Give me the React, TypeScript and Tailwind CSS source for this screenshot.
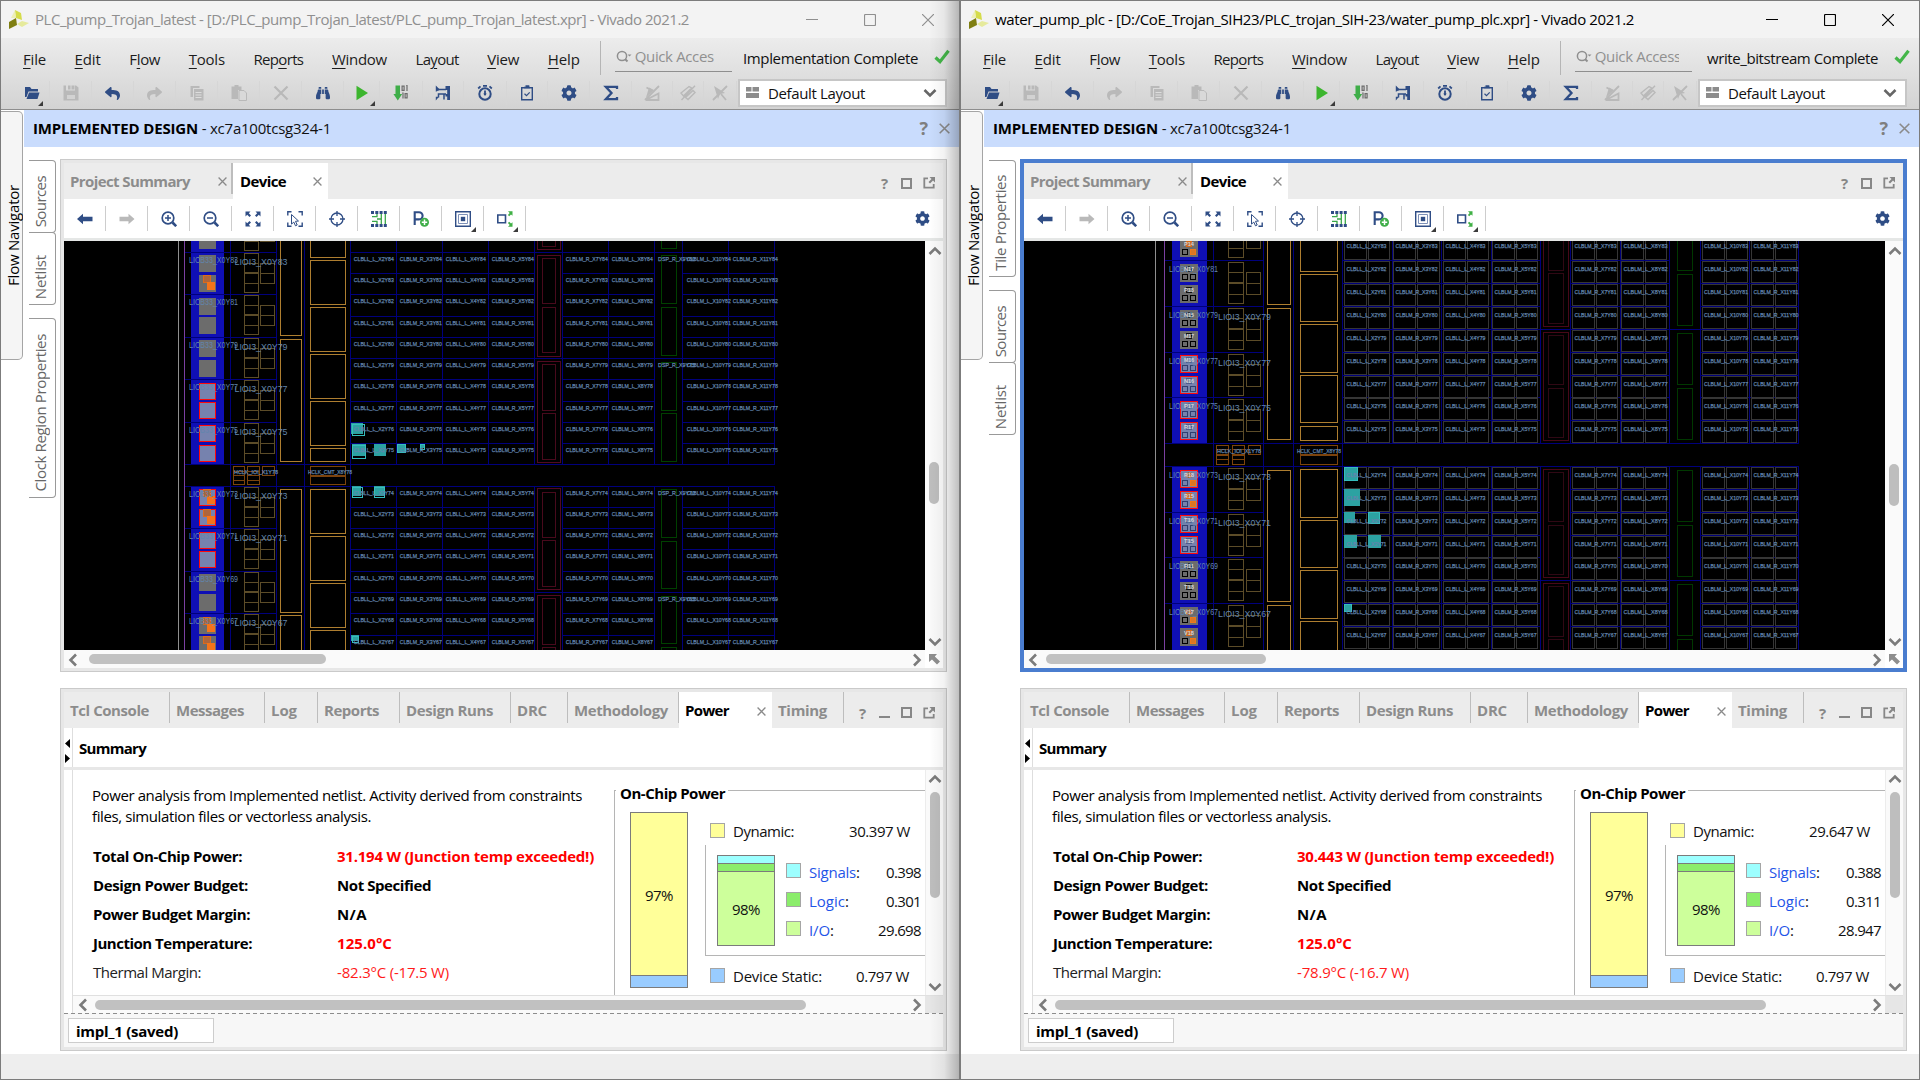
import React, { createContext, useContext, useLayoutEffect, useRef, useState } from "react";
import { FaBinoculars, FaCog, FaReply, FaShare } from "react-icons/fa";

/* ---------- text ---------- */

type FitProps = { w: number; children: React.ReactNode; className?: string; vertical?: boolean };

/** Inline label whose tracking is tuned so that it occupies exactly `w` pixels. */
function Fit({ w, children, className = "", vertical = false }: FitProps) {
  const ref = useRef<HTMLSpanElement>(null);
  const [tracking, setTracking] = useState(0);
  useLayoutEffect(() => {
    const el = ref.current;
    if (!el) return;
    const natural = vertical ? el.offsetHeight : el.getBoundingClientRect().width;
    const count = (el.textContent || "x").length;
    setTracking((w - natural) / count);
  }, [w, vertical]);
  return (
    <span
      ref={ref}
      className={"inline-block shrink-0 whitespace-pre leading-5 " + (vertical ? "rotate-180 [writing-mode:vertical-rl] " : "") + className}
      style={{ letterSpacing: tracking }}
    >
      {children}
    </span>
  );
}

/* ---------- data ---------- */

type Pad = { y: number; red?: boolean; orange?: boolean; name?: string };
type Box = [number, number, number, number];

type Geometry = {
  ox: number;
  edge: number;
  purple: number;
  blueX: number;
  blueW: number;
  gapTop: number;
  gapBottom: number;
  leftV: number[];
  clb: { x: number; w: number; name: string; tw: number }[];
  clbEnd: number;
  right: number;
  rows: [number, number][];
  wideRows: number[];
  ioRows: [number, number][];
  noIoi: number[];
  padX: number;
  padS: number;
  pads: Pad[];
  logicA: [number, number];
  logicB: [number, number];
  logicLines: number[];
  gold: Box[];
  hclk: Box[];
  hclkText: [number, number, string][];
  bramOuter: Box[];
  bramInner: Box[];
  dsp: Box[];
  colV: number[];
  slices: boolean;
  teal: Box[];
  tealOutline: Box[];
  dspText?: [number, number, number][];
  clbTextDy: number;
  clbTextDx: number;
  lioX: number;
  lioDy: number;
  ioiX: number;
  ioiDy: number;
};

const spans = (x1: number, x2: number, ys: [number, number][]): Box[] => ys.map(([a, b]) => [x1, a, x2, b]);

const leftChip: Geometry = {
  ox: 64,
  edge: 178.5,
  purple: 184.5,
  blueX: 191,
  blueW: 33,
  gapTop: 464.5,
  gapBottom: 486.5,
  leftV: [230.5, 276.5, 304.5, 350.5],
  clb: [
    { x: 350.5, w: 46, name: "CLBLL_L_X2", tw: 40 },
    { x: 396.5, w: 46, name: "CLBLM_R_X3", tw: 42 },
    { x: 442.5, w: 46, name: "CLBLL_L_X4", tw: 40 },
    { x: 488.5, w: 46, name: "CLBLM_R_X5", tw: 42 },
    { x: 562.5, w: 46, name: "CLBLM_R_X7", tw: 42 },
    { x: 608.5, w: 46, name: "CLBLM_L_X8", tw: 41 },
    { x: 683.5, w: 45, name: "CLBLM_L_X10", tw: 44 },
    { x: 729.5, w: 45, name: "CLBLM_R_X11", tw: 45 },
  ],
  clbEnd: 534.5,
  right: 774.5,
  rows: [[252.5, 84], [273.5, 83], [294.5, 82], [316.5, 81], [337.5, 80], [358.5, 79], [379.5, 78], [401.5, 77], [422.5, 76], [443.5, 75], [486.5, 74], [507.5, 73], [528.5, 72], [549.5, 71], [571.5, 70], [592.5, 69], [613.5, 68], [635.5, 67]],
  wideRows: [252.5, 358.5, 464.5, 486.5, 592.5],
  ioRows: [[210, 85], [252.5, 83], [294.5, 81], [337.5, 79], [379.5, 77], [422.5, 75], [486.5, 73], [528.5, 71], [571.5, 69], [613.5, 67]],
  noIoi: [81, 69],
  padX: 199,
  padS: 17,
  pads: [
    { y: 232 }, { y: 255 }, { y: 275, orange: true }, { y: 298 }, { y: 317 }, { y: 340 }, { y: 360 },
    { y: 383, red: true }, { y: 402, red: true }, { y: 425, red: true }, { y: 445, red: true },
    { y: 489, red: true, orange: true }, { y: 509, red: true, orange: true }, { y: 532, red: true }, { y: 551, red: true },
    { y: 574 }, { y: 594 }, { y: 617, orange: true }, { y: 636, orange: true },
  ],
  logicA: [244.5, 258.5],
  logicB: [260.5, 274.5],
  logicLines: [1, 11, 21, 31, 41],
  gold: [
    ...spans(280.5, 301.5, [[230.5, 335.5], [339.5, 461.5], [489.5, 612.5], [615.5, 660.5]]),
    ...spans(310.5, 345.5, [[230.5, 257.5], [260.5, 304.5], [307.5, 351.5], [354.5, 398.5], [401.5, 445.5], [448.5, 461.5], [489.5, 533.5], [536.5, 580.5], [583.5, 627.5], [630.5, 670.5]]),
  ],
  hclk: [
    ...spans(233.5, 244.5, [[466.5, 471.5], [471.5, 475.5], [475.5, 480.5], [480.5, 484.5]]),
    ...spans(247.5, 259.5, [[466.5, 471.5], [471.5, 475.5], [475.5, 480.5], [480.5, 484.5]]),
    [262.5, 466.5, 274.5, 475.5],
    [310.5, 466.5, 345.5, 475.5],
    [310.5, 476.5, 345.5, 484.5],
  ],
  hclkText: [[234, 474, "HCLK_IOI_X1Y78"], [308, 474, "HCLK_CMT_X8Y78"]],
  bramOuter: spans(537.5, 560.5, [[230.5, 249.5], [255.5, 356.5], [361.5, 462.5], [488.5, 589.5], [595.5, 700.5]]),
  bramInner: spans(542.5, 555.5, [[230.5, 246.5], [258.5, 303.5], [307.5, 352.5], [364.5, 410.5], [413.5, 459.5], [492.5, 537.5], [540.5, 586.5], [598.5, 644.5], [647.5, 690.5]]),
  dsp: spans(661.5, 676.5, [[230.5, 248.5], [255.5, 303.5], [307.5, 355.5], [362.5, 410.5], [413.5, 461.5], [489.5, 537.5], [541.5, 588.5], [596.5, 643.5], [647.5, 690.5]]),
  colV: [396.5, 442.5, 488.5, 534.5, 562.5, 608.5, 654.5, 682.5, 728.5, 774.5],
  slices: false,
  teal: [[351, 423, 363, 434], [352, 444, 366, 456], [374, 444, 386, 456], [398, 444, 406, 453], [420, 444, 424, 448], [352, 486, 361, 496], [374, 486, 385, 496], [351, 635, 359, 641]],
  tealOutline: [[352.5, 424.5, 364.5, 435.5], [352.5, 445.5, 365.5, 458.5], [397.5, 444.5, 405.5, 452.5], [420.5, 444.5, 424.5, 449.5], [352.5, 487.5, 362.5, 497.5], [374.5, 487.5, 384.5, 497.5], [352.5, 636.5, 358.5, 642.5]],
  dspText: [[658, 252.5, 80], [658, 358.5, 75], [658, 486.5, 70], [658, 592.5, 65]],
  clbTextDy: 8.6,
  clbTextDx: 3.3,
  lioX: 189,
  lioDy: 10.5,
  ioiX: 234.5,
  ioiDy: 12.3,
};

const rightChip: Geometry = {
  ox: 1024,
  edge: 1155.5,
  purple: 1164.5,
  blueX: 1172,
  blueW: 35,
  gapTop: 443.5,
  gapBottom: 466.5,
  leftV: [1213.5, 1263.5, 1293.5, 1342.5],
  clb: [
    { x: 1342.5, w: 49, name: "CLBLL_L_X2", tw: 40 },
    { x: 1391.5, w: 50, name: "CLBLM_R_X3", tw: 42 },
    { x: 1441.5, w: 49, name: "CLBLL_L_X4", tw: 40 },
    { x: 1490.5, w: 49, name: "CLBLM_R_X5", tw: 42 },
    { x: 1570.5, w: 49, name: "CLBLM_R_X7", tw: 42 },
    { x: 1619.5, w: 49, name: "CLBLM_L_X8", tw: 44 },
    { x: 1700, w: 49, name: "CLBLM_L_X10", tw: 44 },
    { x: 1749.5, w: 49, name: "CLBLM_R_X11", tw: 45 },
  ],
  clbEnd: 1540.5,
  right: 1798.5,
  rows: [[237.5, 83], [260.5, 82], [283.5, 81], [306.5, 80], [329.5, 79], [352.5, 78], [375.5, 77], [397.5, 76], [420.5, 75], [466.5, 74], [489.5, 73], [512.5, 72], [535.5, 71], [557.5, 70], [580.5, 69], [603.5, 68], [626.5, 67]],
  wideRows: [329.5, 443.5, 466.5, 580.5],
  ioRows: [[214.5, 83], [260.5, 81], [306.5, 79], [352.5, 77], [397.5, 75], [466.5, 73], [512.5, 71], [557.5, 69], [603.5, 67]],
  noIoi: [81, 69],
  padX: 1180,
  padS: 18,
  pads: [
    { y: 239, orange: true, name: "P14" }, { y: 264, name: "N17" }, { y: 285, name: "P18" }, { y: 310, name: "N15" }, { y: 331, name: "M17" },
    { y: 355, red: true, name: "M16" }, { y: 376, red: true, name: "N16" }, { y: 401, red: true, name: "P17" }, { y: 422, red: true, name: "R17" },
    { y: 470, red: true, orange: true, name: "R18" }, { y: 491, red: true, orange: true, name: "R15" }, { y: 515, red: true, name: "T16" }, { y: 536, red: true, name: "T15" },
    { y: 561, name: "R11" }, { y: 582, name: "T18" }, { y: 607, orange: true, name: "V17" }, { y: 628, orange: true, name: "V18" },
  ],
  logicA: [1228.5, 1243.5],
  logicB: [1246.5, 1260.5],
  logicLines: [2, 12, 23, 34, 44],
  gold: [
    ...spans(1267.5, 1290.5, [[230.5, 304.5], [308.5, 439.5], [470.5, 601.5], [605.5, 670.5]]),
    ...spans(1300.5, 1337.5, [[230.5, 271.5], [274.5, 321.5], [324.5, 372.5], [375.5, 422.5], [426.5, 440.5], [469.5, 517.5], [520.5, 567.5], [570.5, 618.5], [621.5, 670.5]]),
  ],
  hclk: [
    ...spans(1216.5, 1228.5, [[445.5, 449.5], [449.5, 454.5], [455.5, 459.5], [459.5, 464.5]]),
    ...spans(1232.5, 1244.5, [[445.5, 449.5], [449.5, 454.5], [455.5, 459.5], [459.5, 464.5]]),
    [1248.5, 445.5, 1260.5, 454.5],
    [1300.5, 445.5, 1337.5, 454.5],
    [1300.5, 455.5, 1337.5, 464.5],
  ],
  hclkText: [[1217, 453, "HCLK_IOI_X1Y78"], [1297, 453, "HCLK_CMT_X8Y78"]],
  bramOuter: spans(1543.5, 1568.5, [[220.5, 326.5], [332.5, 440.5], [469.5, 577.5], [583.5, 700.5]]),
  bramInner: spans(1548.5, 1563.5, [[220.5, 270.5], [273.5, 323.5], [335.5, 384.5], [388.5, 437.5], [472.5, 521.5], [525.5, 574.5], [586.5, 636.5], [639.5, 690.5]]),
  dsp: spans(1677.5, 1692.5, [[220.5, 270.5], [274.5, 325.5], [333.5, 384.5], [388.5, 439.5], [470.5, 521.5], [525.5, 576.5], [584.5, 635.5], [639.5, 690.5]]),
  colV: [1392, 1441.5, 1491.5, 1540.5, 1570.5, 1620.5, 1669.5, 1700.5, 1749.5, 1798.5],
  slices: true,
  teal: [[1344, 467, 1358, 480], [1344, 489, 1360, 506], [1344, 512, 1355, 523], [1368, 512, 1379, 524], [1344, 535, 1357, 548], [1368, 535, 1381, 548], [1344, 604, 1352, 612]],
  tealOutline: [[1344.5, 467.5, 1357.5, 480.5], [1368.5, 512.5, 1379.5, 523.5], [1344.5, 604.5, 1351.5, 611.5]],
  clbTextDy: 10,
  clbTextDx: 4,
  lioX: 1169,
  lioDy: 11.5,
  ioiX: 1218,
  ioiDy: 13,
};

type Win = {
  active: boolean;
  title: string;
  titleW: number;
  status: string;
  statusW: number;
  quick: string;
  quickW: number;
  chip: Geometry;
  sideTabs: { name: string; h: number; w: number; gap: boolean }[];
  vThumb: string;
  hThumb: string;
  total: string;
  margin: string;
  dynamic: string;
  signals: string;
  logic: string;
  io: string;
};

const windows: Win[] = [
  {
    active: false,
    title: "PLC_pump_Trojan_latest - [D:/PLC_pump_Trojan_latest/PLC_pump_Trojan_latest.xpr] - Vivado 2021.2",
    titleW: 654,
    status: "Implementation Complete",
    statusW: 175,
    quick: "Quick Acces",
    quickW: 79,
    chip: leftChip,
    sideTabs: [
      { name: "Sources", h: 73, w: 51, gap: false },
      { name: "Netlist", h: 73, w: 44, gap: false },
      { name: "Clock Region Properties", h: 180, w: 158, gap: true },
    ],
    vThumb: "mt-[203px]",
    hThumb: "ml-[8px] w-[237px]",
    total: "31.194 W (Junction temp exceeded!)",
    margin: "-82.3°C (-17.5 W)",
    dynamic: "30.397 W",
    signals: "0.398",
    logic: "0.301",
    io: "29.698",
  },
  {
    active: true,
    title: "water_pump_plc - [D:/CoE_Trojan_SIH23/PLC_trojan_SIH-23/water_pump_plc.xpr] - Vivado 2021.2",
    titleW: 639,
    status: "write_bitstream Complete",
    statusW: 171,
    quick: "Quick Access",
    quickW: 86,
    chip: rightChip,
    sideTabs: [
      { name: "Tile Properties", h: 117, w: 96, gap: false },
      { name: "Sources", h: 73, w: 51, gap: true },
      { name: "Netlist", h: 73, w: 44, gap: false },
    ],
    vThumb: "mt-[205px]",
    hThumb: "ml-[5px] w-[220px]",
    total: "30.443 W (Junction temp exceeded!)",
    margin: "-78.9°C (-16.7 W)",
    dynamic: "29.647 W",
    signals: "0.388",
    logic: "0.311",
    io: "28.947",
  },
];

const WinContext = createContext<Win>(windows[0]);

/* ---------- icons ---------- */

const navy = "#2f4d85";
const dim = "#b9b9b9";

type SvgProps = { children: React.ReactNode; size?: number; className?: string };
function Svg({ children, size = 16, className = "" }: SvgProps) {
  return (
    <svg width={size} height={size} viewBox="0 0 16 16" fill="none" className={"block shrink-0 " + className}>
      {children}
    </svg>
  );
}

const Logo = () => (
  <svg width="20" height="20" viewBox="0 0 20 20" className="block shrink-0">
    <path d="M0 12 7 8 8 15 0 19Z" fill="#7f7f12" />
    <path d="M6 0 12 3 13 10 7 8Z" fill="#d5dc4b" />
    <path d="M6 0 2 8 7 8Z" fill="#e9ed9b" opacity=".7" />
    <path d="M8 14 13 11 20 13 13 17Z" fill="#e6ea9c" />
  </svg>
);
const OpenIcon = () => (
  <Svg><path d="M1 2h5l1.500 2H14v2.500H4.500L2.500 12 1 12Z" fill={navy} /><path d="M5 7.500h10.500L13.500 14H2.500Z" fill={navy} /></Svg>
);
const SaveIcon = () => (
  <Svg><path d="M.5.5h2.500v5h9V.5h1l2.500 2v13H.5Z" fill={dim} /><path d="M8.500.5h3V4.500h-3zM5 .5h2.500v4H5z" fill={dim} /><path d="M4 10h8v4H4z" fill="#d2d2d2" /></Svg>
);
const CopyIcon = () => (
  <Svg><path d="M1.500 1h9v2H4v9H1.500Z" fill={dim} /><path d="M5 4h9.500v11.500H5Z" fill={dim} /><path d="M6.500 7.500h6M6.500 10h6M6.500 12.500h6" stroke="#ddd" /></Svg>
);
const PasteIcon = () => (
  <Svg><path d="M.5 1.500h3V0h4v1.500h3V5H7v9H.5Z" fill={dim} /><path d="M8 5.500h5l2.500 2.500v7.500H8Z" fill="#d9d9d9" stroke={dim} /></Svg>
);
const CrossIcon = () => <Svg><path d="M1.500 1.500l13 13M14.500 1.500l-13 13" stroke={dim} strokeWidth="2.200" /></Svg>;
const RunIcon = () => <Svg><path d="M2.500.8 14 8 2.500 15.200Z" fill="#3cb52e" /></Svg>;
const BitsIcon = () => (
  <Svg>
    <path d="M2.500.5H7V9h2.200l-4.400 6.500L.4 9h2.100Z" fill="#3fae49" />
    <g stroke="#6d6d6d" strokeWidth="1.200"><path d="M9.100 1.100h2v4.300h-2zM13.200.5H14v5.500M9.200 8H10v5.500M12.100 8.600h2v4.300h-2z" /></g>
  </Svg>
);
const RouteIcon = () => (
  <Svg>
    <path d="M.8.5v15L4 11.800H.8ZM.8.5v6.300L5 4.800Z" fill={navy} />
    <path d="M3 4.500h8M3.500 12.500V9h7.500M9 14.500V9" stroke={navy} strokeWidth="1.500" />
    <path d="M10.500 1H15v14h-2.800V5h-1.700ZM10.500 9h2v2.500h-2z" fill={navy} />
  </Svg>
);
const TimerIcon = () => (
  <Svg><circle cx="8" cy="9" r="5.700" stroke={navy} strokeWidth="2" /><path d="M8 5.500v4.500M6 .8h4M1.200 3.500 3.500 1.300M14.800 3.500 12.500 1.300" stroke={navy} strokeWidth="1.800" /><path d="M6.300 8.500h3.400L8 11Z" fill={navy} /></Svg>
);
const ClipIcon = () => (
  <Svg><path d="M2.700 2.700h10.600v12H2.700z" stroke={navy} strokeWidth="1.400" /><path d="M5 2.500h6M6.500 1h3v2" stroke={navy} strokeWidth="1.600" /><path d="m5.500 8.800 2 1.900 3.200-3.400" stroke={navy} strokeWidth="1.200" /></Svg>
);
const SigmaIcon = () => <Svg><path d="M14 4V1.800H2.800L8.500 8l-5.700 6.200H14V12" stroke={navy} strokeWidth="2.300" /></Svg>;
const MuteA = () => <Svg><path d="M2 15h12.500V8.500ZM2.500 2.500 7 5M15 1 1 15" stroke={dim} strokeWidth="1.800" /><path d="M2 12.500 10 5 5 2.500Z" fill={dim} /></Svg>;
const MuteB = () => <Svg><path d="M1 8 9 1.500l2.500 1.500-8 8ZM5.500 12.500 13 5.500l2 2-7 7ZM15 .8 1.500 15" stroke={dim} strokeWidth="1.400" /></Svg>;
const MuteC = () => <Svg><path d="M2 1l11 7-5 1-2 5Z" fill={dim} /><path d="M15 1 1 15M9 9l5 6" stroke={dim} strokeWidth="1.800" /></Svg>;
const ArrowL = () => <Svg><path d="M0 8l6-5.200v3h9.500v4.400H6v3Z" fill={navy} /></Svg>;
const ArrowR = () => <Svg><path d="M15.500 8l-6-5.200v3H.5v4.400h9v3Z" fill={dim} /></Svg>;
const Zoom = ({ plus }: { plus?: boolean }) => (
  <Svg><circle cx="7" cy="7" r="5.800" stroke={navy} strokeWidth="1.700" /><path d={plus ? "M4 7h6M7 4v6" : "M4 7h6"} stroke={navy} strokeWidth="1.500" /><path d="m11.500 11.500 3.700 3.700" stroke={navy} strokeWidth="2.600" /></Svg>
);
const FitIcon = () => (
  <Svg><path d="M.5.5h5L3.800 2.200 6 4.500 4.500 6 2.200 3.800.5 5.500ZM15.500.5v5l-1.700-1.700L11.500 6 10 4.500l2.200-2.300L10.500.5ZM.5 15.500v-5l1.700 1.700L4.500 10 6 11.500l-2.200 2.300 1.700 1.700ZM15.500 15.500h-5l1.700-1.700-2.200-2.300 1.500-1.500 2.300 2.200 1.700-1.700Z" fill={navy} /></Svg>
);
const PickIcon = () => (
  <Svg><path d="M.8 4.500V.8h3.700M11.500.8h3.700v3.700M.8 11.500v3.700h3.700M15.200 11.500v3.700h-3.700" stroke={navy} strokeWidth="1.400" /><path d="m4.500 3.500 7 6.500-3 .3 1.700 3.700-1.700.8-1.700-3.700-2.300 2Z" stroke={navy} strokeWidth="1" /></Svg>
);
const Target = () => <Svg><circle cx="8" cy="8" r="6" stroke={navy} strokeWidth="1.300" /><path d="M8 0v5M8 11v5M0 8h5M11 8h5" stroke={navy} strokeWidth="1.300" /></Svg>;
const NetsIcon = () => (
  <Svg>
    <g fill={navy}>
      {[0, 4.300, 8.600, 12.800].map((x) => <path key={x} d={`M${x} 0h3v3h-3zM${x} 13h3v3h-3z`} />)}
    </g>
    <path d="M1 5.700h5V3M6 13v-2.700H1M6 8h4.300V3M10.300 8v5M14.300 3v10" stroke="#3aa648" strokeWidth="1.300" />
  </Svg>
);
const PIcon = () => (
  <Svg><path d="M1.700 14V1.200H6a3.600 3.600 0 0 1 0 7.200H2" stroke={navy} strokeWidth="2.100" /><circle cx="11.500" cy="11.200" r="4.500" fill="#3fae49" /><path d="M11.500 8.500v5.400M8.800 11.200h5.400" stroke="#fff" strokeWidth="1.500" /></Svg>
);
const NestIcon = () => (
  <Svg><path d="M.7.7h14.600v14.600H.7z" stroke={navy} strokeWidth="1.400" /><path d="M3.500 3.500h9v9h-9z" stroke="#7d90b8" /><path d="M5.800 5.800h4.400v4.400H5.800z" fill={navy} /></Svg>
);
const SpreadIcon = () => (
  <Svg><path d="M.8 4h7.700v7.700H.8z" stroke={navy} strokeWidth="1.600" /><path d="M15.500.3v4.500l-1.500-1.400-1.800 1.900-1.300-1.200L12.700 2 11 .3ZM15.500 15.700v-4.500L14 12.600l-1.800-1.900-1.300 1.200 1.800 2.100-1.700 1.700Z" fill="#3fb045" /></Svg>
);
const CheckIcon = () => <Svg><path d="M1.500 8.500 6 12.700 14.500 1.800" stroke="#44b649" strokeWidth="3.200" /></Svg>;
const Chevron = ({ d, c = "#7b7b7b" }: { d: "up" | "down" | "left" | "right"; c?: string }) => {
  const paths = { up: "M2.500 11 8 5.500 13.500 11", down: "M2.500 5 8 10.500 13.500 5", left: "M11 2.500 5.500 8 11 13.500", right: "M5 2.500 10.500 8 5 13.500" };
  return <Svg><path d={paths[d]} stroke={c} strokeWidth="2.600" /></Svg>;
};
const SmallX = ({ size = 9 }: { size?: number }) => <Svg size={size}><path d="M1 1l14 14M15 1 1 15" stroke="#8a8a8a" strokeWidth="2.300" /></Svg>;
const HelpMark = () => <span className="block w-[11px] text-center text-[15px] leading-4 font-bold text-[#878787]">?</span>;
const MaxBox = () => <span className="block size-[11px] border-2 border-[#878787]" />;
const PopOut = () => (
  <svg width="12" height="12" viewBox="0 0 12 12" fill="none" className="block shrink-0"><path d="M5 1.300H1.300v9.400h9.400V7" stroke="#878787" strokeWidth="1.800" /><path d="M12 0v5.500L10 3.500 7 6.500 5.500 5l3-3L6.500 0Z" fill="#878787" /></svg>
);
const Corner = ({ className }: { className: string }) => (
  <svg width="5" height="5" viewBox="0 0 5 5" className={"absolute block " + className}><path d="M5 0V5H0Z" fill="#3b3b3b" /></svg>
);

/* ---------- title bar and header ---------- */

function TitleBar() {
  const win = useContext(WinContext);
  const tone = win.active ? "text-black" : "text-[#8f8f8f]";
  return (
    <div className={"flex h-[37px] items-center bg-[#f3f3f3] pl-[8px] " + tone}>
      <Logo />
      <Fit w={win.titleW} className="ml-[6px] -mt-px">{win.title}</Fit>
      <div className="ml-auto flex items-center gap-[46px] pr-[25px]">
        <svg width="12" height="12" viewBox="0 0 12 12"><path d="M0 5.500h12" stroke="currentColor" /></svg>
        <svg width="12" height="12" viewBox="0 0 12 12" fill="none"><rect x=".5" y=".5" width="11" height="11" rx="1" stroke="currentColor" strokeWidth="1.200" /></svg>
        <svg width="12" height="12" viewBox="0 0 12 12"><path d="M0 0l12 12M12 0 0 12" stroke="currentColor" strokeWidth="1.200" /></svg>
      </div>
    </div>
  );
}

const menus: [string, string, string, number][] = [
  ["", "F", "ile", 23], ["", "E", "dit", 26], ["F", "l", "ow", 31], ["", "T", "ools", 36], ["Rep", "o", "rts", 50],
  ["", "W", "indow", 55], ["La", "y", "out", 43], ["", "V", "iew", 32], ["", "H", "elp", 32],
];

function MenuRow() {
  const win = useContext(WinContext);
  return (
    <div className="flex h-[39px] items-start pl-[22px]">
      <div className="mt-[11px] flex gap-[28.600px] text-[#1c1c1c]">
        {menus.map(([a, b, c, w]) => (
          <Fit key={a + b + c} w={w}>{a}<span className="underline underline-offset-[3px]">{b}</span>{c}</Fit>
        ))}
      </div>
      <div className="mt-[3px] ml-[20px] h-[34px] w-px bg-[#b5b5b5]" />
      <div className="mt-[8px] ml-[14px] flex h-[26px] w-[117px] items-start border-b border-[#8f8f8f] text-[#909090]">
        <svg width="17" height="16" viewBox="0 0 17 16" fill="none" className="mt-[3px] ml-px shrink-0">
          <circle cx="6" cy="7" r="4.600" stroke="#8f8f8f" strokeWidth="1.500" /><path d="m9 10 2.500 2.500" stroke="#8f8f8f" strokeWidth="2" /><path d="M11.500 5.500h4l-2 2Z" fill="#8f8f8f" />
        </svg>
        <div className="ml-[2px] w-[84px] overflow-hidden"><Fit w={win.quickW}>{win.quick}</Fit></div>
      </div>
      <div className="ml-auto flex items-start pr-[9px] text-[#111]">
        <Fit w={win.statusW} className="mt-[10px]">{win.status}</Fit>
        <span className="mt-[11px] ml-[16px]"><CheckIcon /></span>
      </div>
    </div>
  );
}

type ToolDef = { w: string; icon: React.ReactNode; corner?: boolean };
const mainTools: ToolDef[] = [
  { w: "w-[42px] pl-[6px]", icon: <OpenIcon />, corner: true },
  { w: "w-[42px]", icon: <SaveIcon /> },
  { w: "w-[42px]", icon: <FaReply size={15} color={navy} /> },
  { w: "w-[42px]", icon: <FaShare size={15} color={dim} /> },
  { w: "w-[42px]", icon: <CopyIcon /> },
  { w: "w-[42px]", icon: <PasteIcon /> },
  { w: "w-[42px]", icon: <CrossIcon /> },
  { w: "w-[42px]", icon: <FaBinoculars size={14} color={navy} /> },
  { w: "w-[36px]", icon: <RunIcon />, corner: true },
  { w: "w-[43px]", icon: <BitsIcon /> },
  { w: "w-[41px]", icon: <RouteIcon /> },
  { w: "w-[43px]", icon: <TimerIcon /> },
  { w: "w-[41px]", icon: <ClipIcon /> },
  { w: "w-[42px]", icon: <FaCog size={16} color={navy} /> },
  { w: "w-[42px]", icon: <SigmaIcon /> },
  { w: "w-[41px]", icon: <MuteA /> },
  { w: "w-[31px]", icon: <MuteB /> },
  { w: "w-[33px]", icon: <MuteC /> },
];

function MainToolbar() {
  return (
    <div className="flex h-[32px] items-center pl-[7px]">
      {mainTools.map((t, i) => (
        <div key={i} className={"relative flex h-6 shrink-0 items-center justify-center border-r border-[#d6d6d6] " + t.w}>
          {t.icon}
          {t.corner && <Corner className={i === 0 ? "right-[6px] bottom-[-1px]" : "right-[4px] bottom-[-1px]"} />}
        </div>
      ))}
      <div className="ml-[1px] flex h-[28px] w-[209px] items-center border-2 border-[#c6c6c6] bg-white pr-[7px] pl-[6px]">
        <svg width="13" height="12" viewBox="0 0 13 12" className="block" fill="#8c8c8c"><path d="M0 0h5.500v4.500H0zM6.500 0H13v4.500H6.500zM0 6h13v5H0z" /></svg>
        <Fit w={97} className="ml-[9px] text-[#111]">Default Layout</Fit>
        <span className="ml-auto"><Chevron d="down" c="#666" /></span>
      </div>
    </div>
  );
}

/* ---------- device view ---------- */

const deviceTools: ToolDef[] = [
  { w: "w-[42px]", icon: <ArrowL /> },
  { w: "w-[42px]", icon: <ArrowR /> },
  { w: "w-[42px]", icon: <Zoom plus /> },
  { w: "w-[42px]", icon: <Zoom /> },
  { w: "w-[42px]", icon: <FitIcon /> },
  { w: "w-[42px]", icon: <PickIcon /> },
  { w: "w-[42px]", icon: <Target /> },
  { w: "w-[42px]", icon: <NetsIcon /> },
  { w: "w-[42px]", icon: <PIcon /> },
  { w: "w-[42px]", icon: <NestIcon />, corner: true },
  { w: "w-[42px]", icon: <SpreadIcon />, corner: true },
];

const rectsPath = (boxes: Box[]) => boxes.map(([a, b, c, d]) => `M${a} ${b}H${c}V${d}H${a}Z`).join("");

function DeviceCanvas() {
  const g = useContext(WinContext).chip;
  const x0 = g.purple;
  const logic: Box[] = [];
  g.ioRows.forEach(([y]) => {
    const l = g.logicLines;
    for (let i = 0; i < 4; i++) logic.push([g.logicA[0], y + l[i], g.logicA[1], y + l[i + 1] - (i % 2)]);
    logic.push([g.logicB[0], y + l[1], g.logicB[1], y + l[2]]);
    logic.push([g.logicB[0], y + l[2], g.logicB[1], y + l[3]]);
  });
  const ioLines = g.ioRows.map(([y]) => `M${x0} ${y}H${g.leftV[1]}`).join("");
  const clbLines = g.rows.map(([y]) => `M${g.clb[0].x} ${y}H${g.colV[3]}M${g.colV[4]} ${y}H${g.colV[6]}M${g.colV[7]} ${y}H${g.right}`).join("");
  const wide = g.wideRows.map((y) => `M${g.clb[0].x} ${y}H${g.right}`).join("");
  const slices: Box[] = [];
  if (g.slices) {
    g.rows.forEach(([y]) => g.clb.forEach((c) => {
      slices.push([c.x + 2, y + 1, c.x + 24, y + 22]);
      slices.push([c.x + 26, y + 1, c.x + c.w - 2, y + 22]);
    }));
  }
  const label = "#6285ad";
  return (
    <svg width="861" height="409" viewBox={`${g.ox} 241 861 409`} className="block shrink-0 bg-black" fontFamily="'Liberation Sans', Arial, sans-serif">
      <g shapeRendering="crispEdges" fill="none">
        <rect x={g.blueX} y="230" width={g.blueW} height={g.gapTop - 230} fill="#0f0fb5" />
        <rect x={g.blueX} y={g.gapBottom} width={g.blueW} height="200" fill="#0f0fb5" />
        <path d={`M${g.edge} 230V700`} stroke="#8f8f8f" />
        <path d={`M${g.purple} 230V700`} stroke="#7b3fa0" />
        <path d={ioLines + clbLines + wide} stroke="#00007c" />
        <path d={`M${x0} ${g.gapTop}H${g.clb[0].x}M${x0} ${g.gapBottom}H${g.clb[0].x}`} stroke="#00007c" />
        <path d={g.leftV.map((x) => `M${x} 230V700`).join("")} stroke="#00007c" />
        <path d={g.colV.map((x) => `M${x} 230V${g.gapTop}M${x} ${g.gapBottom}V700`).join("")} stroke="#00007c" />
        <path d={rectsPath(slices)} stroke="#363636" />
        <path d={rectsPath(logic)} stroke="#5c4c28" />
        <path d={rectsPath(g.gold)} stroke="#ae7e30" />
        <path d={rectsPath(g.hclk)} stroke="#7d430c" />
        <path d={rectsPath(g.bramOuter)} stroke={g.slices ? "#480818" : "#520a20"} />
        <path d={rectsPath(g.bramInner)} stroke={g.slices ? "#300814" : "#480a1c"} />
        <path d={rectsPath(g.dsp)} stroke={g.slices ? "#003800" : "#004000"} />
        {g.pads.map((p) => (
          <g key={p.y}>
            <rect x={g.padX} y={p.y} width={g.padS} height={g.padS} fill={p.red ? "#7682ae" : "#6c6c6c"} />
            {p.red && <rect x={g.padX + 0.5} y={p.y + 0.5} width={g.padS - 1} height={g.padS - 1} stroke="#ff0a0a" />}
            {p.name ? (
              <>
                <rect x={g.padX + 6.500} y={p.y + 2.500} width="5" height="5" stroke={p.orange ? "#d96716" : p.red ? "#4d5c8c" : "#111"} fill={p.orange ? "#c06a2c" : "none"} />
                <rect x={g.padX + 2.500} y={p.y + 10.500} width="5" height="5" stroke={p.red ? "#303f70" : "#000"} />
                <rect x={g.padX + 10.500} y={p.y + 10.500} width="5" height="5" stroke={p.orange ? "#f07818" : p.red ? "#303f70" : "#000"} fill={p.orange ? "#d97726" : "none"} />
              </>
            ) : p.orange ? (
              <>
                <rect x={g.padX + 4.500} y={p.y + 0.500} width="7" height="7" fill="#ad653c" stroke="#dc6a1a" />
                <rect x={g.padX + 8} y={p.y + 7} width="8" height="8" fill="#f4741a" />
              </>
            ) : null}
          </g>
        ))}
        {g.teal.map(([a, b, c, d]) => <rect key={`${a}-${b}`} x={a} y={b} width={c - a} height={d - b} fill="#2ca2a2" />)}
        <path d={rectsPath(g.tealOutline)} stroke="#35bdbd" />
      </g>
      <g fill={label}>
        {g.ioRows.slice(1).map(([y, n]) => (
          <g key={n}>
            <text x={g.lioX} y={y + g.lioDy} fontSize="8.500" textLength="49" lengthAdjust="spacingAndGlyphs">{`LIOB33_X0Y${n}`}</text>
            {!g.noIoi.includes(n) && <text x={g.ioiX} y={y + g.ioiDy} fontSize="9.500" textLength="53" lengthAdjust="spacingAndGlyphs">{`LIOI3_X0Y${n}`}</text>}
          </g>
        ))}
        <g stroke={label} strokeWidth="0.250">
          {g.rows.map(([y, n]) => g.clb.map((c) => (
            <text key={c.name + n} x={c.x + g.clbTextDx} y={y + g.clbTextDy} fontSize="5.800" textLength={c.tw} lengthAdjust="spacingAndGlyphs">{`${c.name}Y${n}`}</text>
          )))}
          {g.dspText?.map(([x, y, n]) => (
            <text key={n} x={x} y={y + g.clbTextDy} fontSize="5.800" textLength="37" lengthAdjust="spacingAndGlyphs">{`DSP_R_X9Y${n}`}</text>
          ))}
          {g.hclkText.map(([x, y, t]) => <text key={t} x={x} y={y} fontSize="5.800" textLength="44" lengthAdjust="spacingAndGlyphs">{t}</text>)}
        </g>
      </g>
      <g fill="#d5d5d5" fontWeight="bold">
        {g.pads.filter((p) => p.name).map((p) => <text key={p.y} x={g.padX + 4} y={p.y + 6.500} fontSize="5.800" textLength="10" lengthAdjust="spacingAndGlyphs">{p.name}</text>)}
      </g>
    </svg>
  );
}

function DevicePanel() {
  const win = useContext(WinContext);
  return (
    <div className={"flex h-[513px] w-[887px] flex-col " + (win.active ? "border-4 border-[#4a7dcf]" : "border border-[#cacaca] bg-[#e7e7e7] p-[3px]")}>
      <div className="flex h-9 shrink-0 bg-[#ececec] font-bold">
        <div className="flex w-[169px] items-center pl-[6px] text-[#8c8c8c]">
          <Fit w={120}>Project Summary</Fit>
          <span className="ml-auto pr-[4px]"><SmallX /></span>
          <span className="h-[31px] w-[2px] self-start bg-[#bdbdbd]" />
        </div>
        <div className="flex w-[95px] items-center bg-white pl-[7px]">
          <Fit w={46}>Device</Fit>
          <span className="ml-auto pr-[6px]"><SmallX /></span>
        </div>
        <div className="mt-[4px] ml-auto flex items-center gap-[11px] pr-[8px]"><HelpMark /><MaxBox /><PopOut /></div>
      </div>
      <div className="flex h-[39px] shrink-0 items-center bg-white">
        {deviceTools.map((t, i) => (
          <div key={i} className={"relative flex h-[25px] items-center justify-center border-r border-[#cdcdcd] " + t.w}>
            {t.icon}
            {t.corner && <Corner className="right-[7px] bottom-[-1px]" />}
          </div>
        ))}
        <span className="mr-[13px] ml-auto"><FaCog size={15} color={navy} /></span>
      </div>
      <div className="h-[3px] shrink-0 bg-[#e5e7e6]" />
      <div className="flex h-[409px] shrink-0">
        <DeviceCanvas />
        <div className="flex w-[18px] flex-col items-center bg-[#fafafa] pt-[2px]">
          <span className="ml-[2px]"><Chevron d="up" /></span>
          <div className={"h-[42px] w-[10px] rounded-full bg-[#bebebe] " + win.vThumb} />
          <span className="mt-auto ml-[2px]"><Chevron d="down" /></span>
        </div>
      </div>
      <div className="flex h-[18px] shrink-0 items-center bg-[#fafafa]">
        <span className="mt-[2px] ml-[1px]"><Chevron d="left" /></span>
        <div className={"mb-px h-[10px] rounded-full bg-[#c1c1c1] " + win.hThumb} />
        <span className="mt-[2px] ml-auto"><Chevron d="right" /></span>
        <span className="flex h-[18px] w-[18px] items-center justify-center bg-white">
          <svg width="11" height="11" viewBox="0 0 11 11" className="block"><path d="M0 0h8L5.800 2.500 11 7.500 8 10.500 3 5.500 0 8Z" fill="#8f8f8f" /></svg>
        </span>
      </div>
    </div>
  );
}

/* ---------- power report ---------- */

const reportTabs: [string, string, number][] = [
  ["Tcl Console", "w-[106px]", 79], ["Messages", "w-[95px]", 68], ["Log", "w-[53px]", 26], ["Reports", "w-[82px]", 55],
  ["Design Runs", "w-[111px]", 87], ["DRC", "w-[57px]", 30], ["Methodology", "w-[111px]", 94],
];

const Swatch = ({ className }: { className: string }) => <span className={"size-[15px] shrink-0 border border-[#a5a5a5] " + className} />;

function PowerChart() {
  const win = useContext(WinContext);
  const nested: [string, number, string, string, number][] = [
    ["Signals", 47, win.signals, "bg-[#9dffff]", 35],
    ["Logic", 36, win.logic, "bg-[#8bed6b]", 35],
    ["I/O", 21, win.io, "bg-[#cdff9b]", 43],
  ];
  return (
    <div className="flex w-[311px] shrink-0 flex-col overflow-hidden">
      <div className="mt-[13px] flex h-5 items-start">
        <span className="mt-[7px] h-[13px] w-[2px] border-t border-l border-[#b5b5b5]" />
        <Fit w={105} className="ml-[4px] font-bold">On-Chip Power</Fit>
        <span className="mt-[7px] ml-[3px] h-px flex-1 bg-[#b5b5b5]" />
      </div>
      <div className="flex flex-1 border-l border-[#b5b5b5]">
        <div className="mt-[9px] ml-[15px] flex h-[176px] w-[58px] shrink-0 flex-col border border-[#7b7b7b] text-[#111]">
          <div className="flex flex-1 items-center justify-center border-b border-[#7b7b7b] bg-[#ffff99] pt-[1px]"><Fit w={28}>97%</Fit></div>
          <div className="h-[11px] bg-[#99ccff]" />
        </div>
        <div className="ml-[17px] flex flex-1 flex-col text-[#111]">
          <div className="mt-[18px] ml-[5px] flex h-[19px] items-center">
            <Swatch className="mb-px bg-[#ffff99]" />
            <Fit w={61} className="ml-[8px]">Dynamic:</Fit>
            <span className="mr-[15px] ml-auto"><Fit w={61}>{win.dynamic}</Fit></span>
          </div>
          <div className="mt-[5px] flex h-[111px] shrink-0 border-b border-l border-[#b5b5b5]">
            <div className="mt-[10px] ml-[11px] flex h-[91px] w-[58px] shrink-0 flex-col border border-[#7b7b7b]">
              <div className="h-[8px] border-b border-[#7b7b7b] bg-[#9dffff]" />
              <div className="h-[8px] border-b border-[#7b7b7b] bg-[#8bed6b]" />
              <div className="flex flex-1 items-center justify-center bg-[#cdff9b] pt-[1px]"><Fit w={28}>98%</Fit></div>
            </div>
            <div className="mt-[17px] flex flex-1 flex-col gap-[9px]">
              {nested.map(([name, w, value, tone, vw]) => (
                <div key={name} className="flex h-5 items-center pl-[11px]">
                  <Swatch className={"mb-[4px] " + tone} />
                  <span className="ml-[8px] flex"><Fit w={w} className="text-[#1f55e8]">{name}</Fit><span className="leading-5">:</span></span>
                  <span className="mr-[4px] ml-auto"><Fit w={vw}>{value}</Fit></span>
                </div>
              ))}
            </div>
          </div>
          <div className="mt-[10px] ml-[5px] flex h-[19px] items-center">
            <Swatch className="mb-px bg-[#99ccff]" />
            <Fit w={89} className="ml-[8px]">Device Static:</Fit>
            <span className="mr-[16px] ml-auto"><Fit w={53}>0.797 W</Fit></span>
          </div>
        </div>
      </div>
    </div>
  );
}

function PowerPanel() {
  const win = useContext(WinContext);
  const facts: [string, number, string, number, string, string][] = [
    ["Total On-Chip Power:", 149, win.total, 257, "font-bold", "font-bold text-[#ff0000]"],
    ["Design Power Budget:", 155, "Not Specified", 94, "font-bold", "font-bold"],
    ["Power Budget Margin:", 157, "N/A", 30, "font-bold", "font-bold"],
    ["Junction Temperature:", 159, "125.0°C", 55, "font-bold", "font-bold text-[#ff0000]"],
    ["Thermal Margin:", 108, win.margin, 112, "text-[#222]", "text-[#ff1a1a]"],
  ];
  return (
    <div className="mt-4 flex h-[363px] w-[887px] flex-col border border-[#cacaca] bg-[#e7e7e7] p-[3px]">
      <div className="flex h-9 shrink-0 bg-[#ececec] font-bold text-[#8c8c8c]">
        {reportTabs.map(([name, cls, w]) => (
          <div key={name} className={"flex shrink-0 items-center pl-[6px] " + cls}>
            <Fit w={w}>{name}</Fit>
            <span className="ml-auto h-[31px] w-[1.500px] self-start bg-[#bdbdbd]" />
          </div>
        ))}
        <div className="flex w-[93px] shrink-0 items-center bg-white pl-[6px]">
          <Fit w={44} className="text-black">Power</Fit>
          <span className="mt-[2px] ml-auto pr-[6px]"><SmallX /></span>
        </div>
        <div className="flex w-[72px] shrink-0 items-center pl-[6px]">
          <Fit w={49}>Timing</Fit>
          <span className="ml-auto h-[31px] w-px self-start bg-[#bdbdbd]" />
        </div>
        <div className="mt-[5px] ml-auto flex items-center gap-[11px] pr-[8px]">
          <HelpMark />
          <span className="mt-[9px] h-[2px] w-[11px] bg-[#878787]" />
          <MaxBox />
          <PopOut />
        </div>
      </div>
      <div className="flex h-[285px] shrink-0 bg-white">
        <div className="flex w-[9px] shrink-0 flex-col border-r border-[#dedede] pt-[11px] pl-[1px]">
          <svg width="6" height="25" viewBox="0 0 6 25" className="block"><path d="M5 0v9L0 4.500ZM0 15v9l5-4.500Z" fill="#000" /></svg>
          <span className="mt-[3px] -ml-px h-[3px] w-[9px] bg-[#e7e7e7]" />
        </div>
        <div className="flex flex-1 flex-col">
          <div className="flex h-[42px] shrink-0 items-center border-b-[3px] border-[#e7e7e7] pl-[6px] font-bold"><Fit w={67}>Summary</Fit></div>
          <div className="flex h-[225px] shrink-0">
            <div className="flex w-[541px] shrink-0 flex-col pt-[15px] pl-[19px]">
              <Fit w={490} className="self-start !leading-[21px]">Power analysis from Implemented netlist. Activity derived from constraints</Fit>
              <Fit w={279} className="self-start !leading-[21px]">files, simulation files or vectorless analysis.</Fit>
              <div className="mt-[19px] flex flex-col gap-[9px] pl-[1px]">
                {facts.map(([name, w, value, vw, a, b]) => (
                  <div key={name} className="flex h-5">
                    <div className="w-[244px]"><Fit w={w} className={a}>{name}</Fit></div>
                    <Fit w={vw} className={b}>{value}</Fit>
                  </div>
                ))}
              </div>
            </div>
            <PowerChart />
            <div className="flex w-[18px] flex-col items-center border-l border-[#ececec] bg-[#fafafa] pt-[1px]">
              <span className="ml-px"><Chevron d="up" /></span>
              <div className="mt-[5px] h-[106px] w-[10px] rounded-full bg-[#bebebe]" />
              <span className="mt-auto ml-px"><Chevron d="down" /></span>
            </div>
          </div>
          <div className="flex h-[18px] shrink-0 items-center border-t border-[#e0e0e0] bg-[#fafafa]">
            <span className="mt-px ml-[2px]"><Chevron d="left" /></span>
            <div className="ml-[4px] h-[10px] w-[711px] rounded-full bg-[#c1c1c1]" />
            <span className="mt-px ml-auto"><Chevron d="right" /></span>
            <span className="h-full w-[18px] bg-[#e6e6e6]" />
          </div>
        </div>
      </div>
      <div className="flex flex-1 flex-col bg-[#f7f7f7]">
        <svg width="879" height="1" className="block"><path d="M0 .5H879" stroke="#8d8d8d" strokeDasharray="4 3" /></svg>
        <div className="mt-[4px] ml-1 flex h-[25px] w-[146px] items-center border border-[#cdcdcd] bg-white pl-[7px] font-bold"><Fit w={102}>impl_1 (saved)</Fit></div>
      </div>
    </div>
  );
}

/* ---------- window ---------- */

function Rails() {
  const win = useContext(WinContext);
  return (
    <div className="flex h-[944px] w-[59px] shrink-0">
      <div className="flex w-[23px] shrink-0 flex-col pt-px">
        <div className="flex h-[249px] w-[22px] items-center justify-center rounded-r-[5px] border border-l-0 border-[#a5a5a5] bg-[#f5f5f5] pl-[2px]">
          <Fit vertical w={101}>Flow Navigator</Fit>
        </div>
      </div>
      <div className="flex flex-col pt-[50px] pl-[5px] text-[#666]">
        {win.sideTabs.map((t) => (
          <div
            key={t.name}
            className={"-mb-px flex w-[27px] flex-col items-center justify-end rounded-r-[4px] border border-l-0 border-[#999] bg-white pr-[5px] pb-[5px] " + (t.gap ? "mt-[14px]" : "")}
            style={{ height: t.h }}
          >
            <Fit vertical w={t.w}>{t.name}</Fit>
          </div>
        ))}
      </div>
    </div>
  );
}

function VivadoWindow({ win }: { win: Win }) {
  return (
    <WinContext.Provider value={win}>
      <section className="relative flex h-[1080px] w-[960px] flex-col overflow-hidden border border-[#7c7c7c] bg-white">
        <TitleBar />
        <div className="h-[72px] shrink-0 border-b border-[#8e8e8e] bg-linear-to-b from-[#ececec] to-[#d3d3d3]">
          <MenuRow />
          <MainToolbar />
        </div>
        <div className="flex h-[944px] shrink-0">
          <Rails />
          <div className="flex flex-1 flex-col">
            <div className="-ml-[36px] flex h-[37px] shrink-0 items-center bg-[#c9dcfd] pr-[9px] pl-[9px]">
              <Fit w={165} className="-mt-px font-bold">IMPLEMENTED DESIGN</Fit>
              <Fit w={133} className="-mt-px text-[#111]"> - xc7a100tcsg324-1</Fit>
              <span className="mt-[-2px] ml-auto text-[18px] font-bold leading-5 text-[#7f7f7f]">?</span>
              <span className="ml-[11px]"><SmallX size={11} /></span>
            </div>
            <div className="mt-[12px]"><DevicePanel /></div>
            <PowerPanel />
          </div>
        </div>
        <div className="flex-1 bg-[#eeeeee]" />
        {!win.active && <div className="pointer-events-none absolute inset-y-0 right-0 w-[30px] bg-linear-to-r from-transparent via-black/5 to-black/25" />}
      </section>
    </WinContext.Provider>
  );
}

export default function App() {
  return (
    <main className="flex h-[1080px] w-[1920px] overflow-hidden bg-white font-['Open_Sans','Noto_Sans',sans-serif] text-[15px] leading-5 text-black">
      {windows.map((w) => <VivadoWindow key={w.title} win={w} />)}
    </main>
  );
}
